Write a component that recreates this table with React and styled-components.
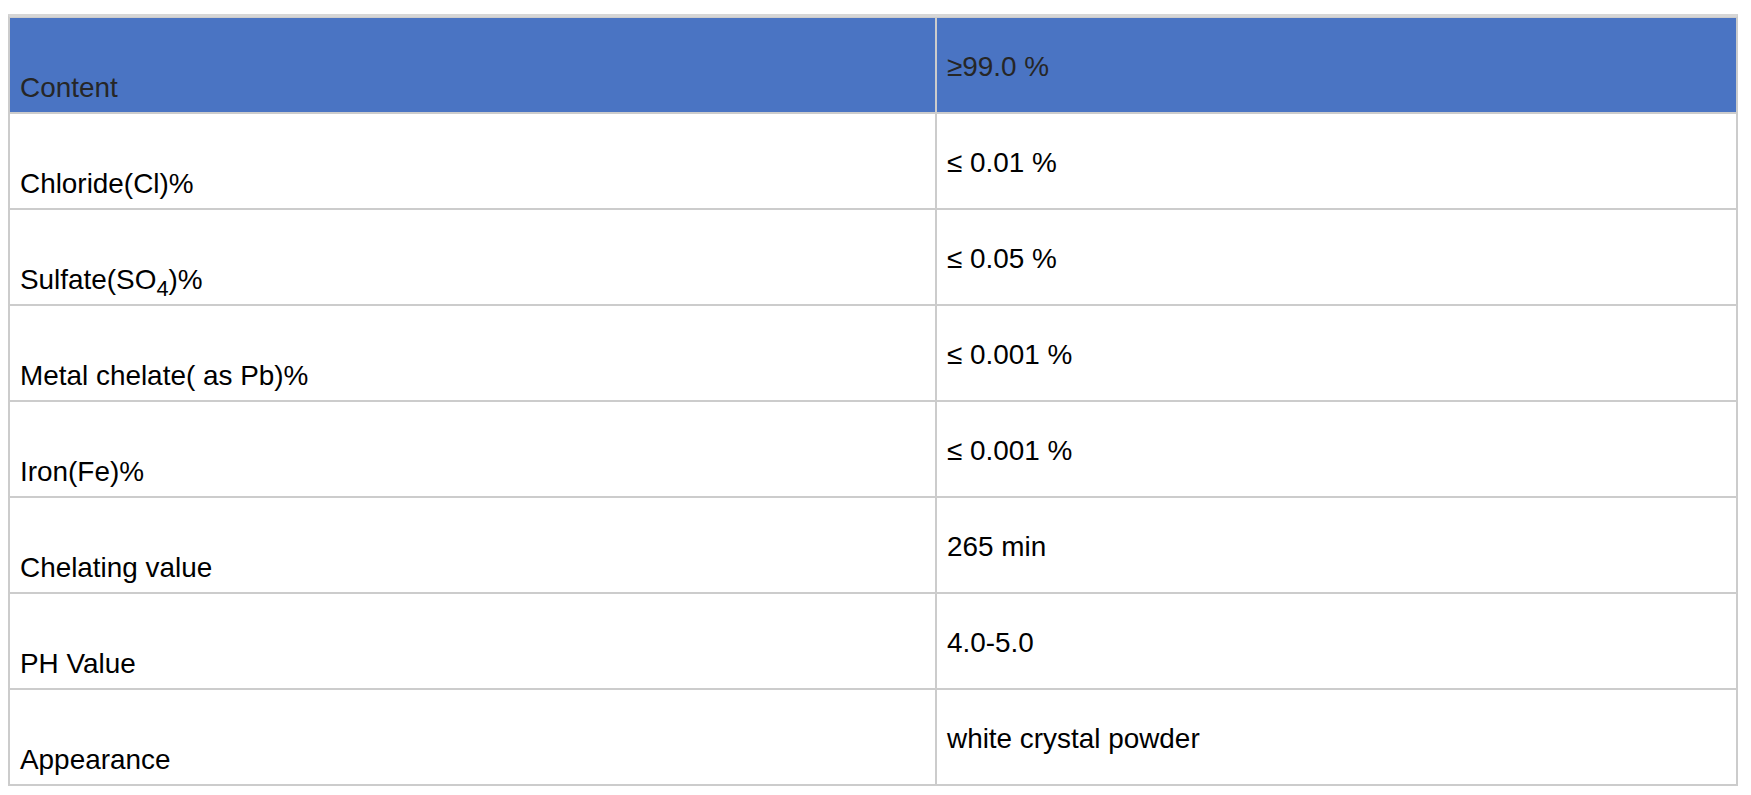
import React from "react";
import styled, { createGlobalStyle } from "styled-components";

const GlobalStyle = createGlobalStyle`
  html, body {
    margin: 0;
    padding: 0;
    background: #ffffff;
  }
  body {
    padding: 14px 8px 8px 8px;
    font-family: "Liberation Sans", Arial, sans-serif;
  }
`;

const SpecTable = styled.table`
  width: 1730px;
  table-layout: fixed;
  border-collapse: separate;
  border-spacing: 0;
  border: 1px solid #cccccc;
  border-top: 3px solid #d6d6d6;
  font-family: "Liberation Sans", Arial, sans-serif;
  font-size: 27.9px;
  line-height: 32px;
`;

const Row = styled.tr`
  background: ${(p) => (p.$head ? "#4a74c3" : "#ffffff")};
  color: ${(p) => (p.$head ? "#262626" : "#000000")};
`;

const Cell = styled.td`
  border: 1px solid #cccccc;
  padding: 12px 10px 8px 10px;
  height: 74px;
  vertical-align: ${(p) => (p.$label ? "bottom" : "middle")};
  white-space: nowrap;
  overflow: hidden;
`;

const Sub = styled.sub`
  font-size: 0.78em;
  line-height: 0;
  vertical-align: -0.3em;
`;

const rows = [
  { label: "Content", value: "≥99.0 %", head: true },
  { label: "Chloride(Cl)%", value: "≤ 0.01 %" },
  {
    label: (
      <>
        Sulfate(SO<Sub>4</Sub>)%
      </>
    ),
    value: "≤ 0.05 %",
  },
  { label: "Metal chelate( as Pb)%", value: "≤ 0.001 %" },
  { label: "Iron(Fe)%", value: "≤ 0.001 %" },
  { label: "Chelating value", value: "265 min" },
  { label: "PH Value", value: "4.0-5.0" },
  { label: "Appearance", value: "white crystal powder" },
];

export default function App() {
  return (
    <>
      <GlobalStyle />
      <SpecTable>
        <colgroup>
          <col style={{ width: 927 }} />
          <col style={{ width: 801 }} />
        </colgroup>
        <tbody>
          {rows.map((r, i) => (
            <Row key={i} $head={r.head}>
              <Cell $label>{r.label}</Cell>
              <Cell>{r.value}</Cell>
            </Row>
          ))}
        </tbody>
      </SpecTable>
    </>
  );
}
